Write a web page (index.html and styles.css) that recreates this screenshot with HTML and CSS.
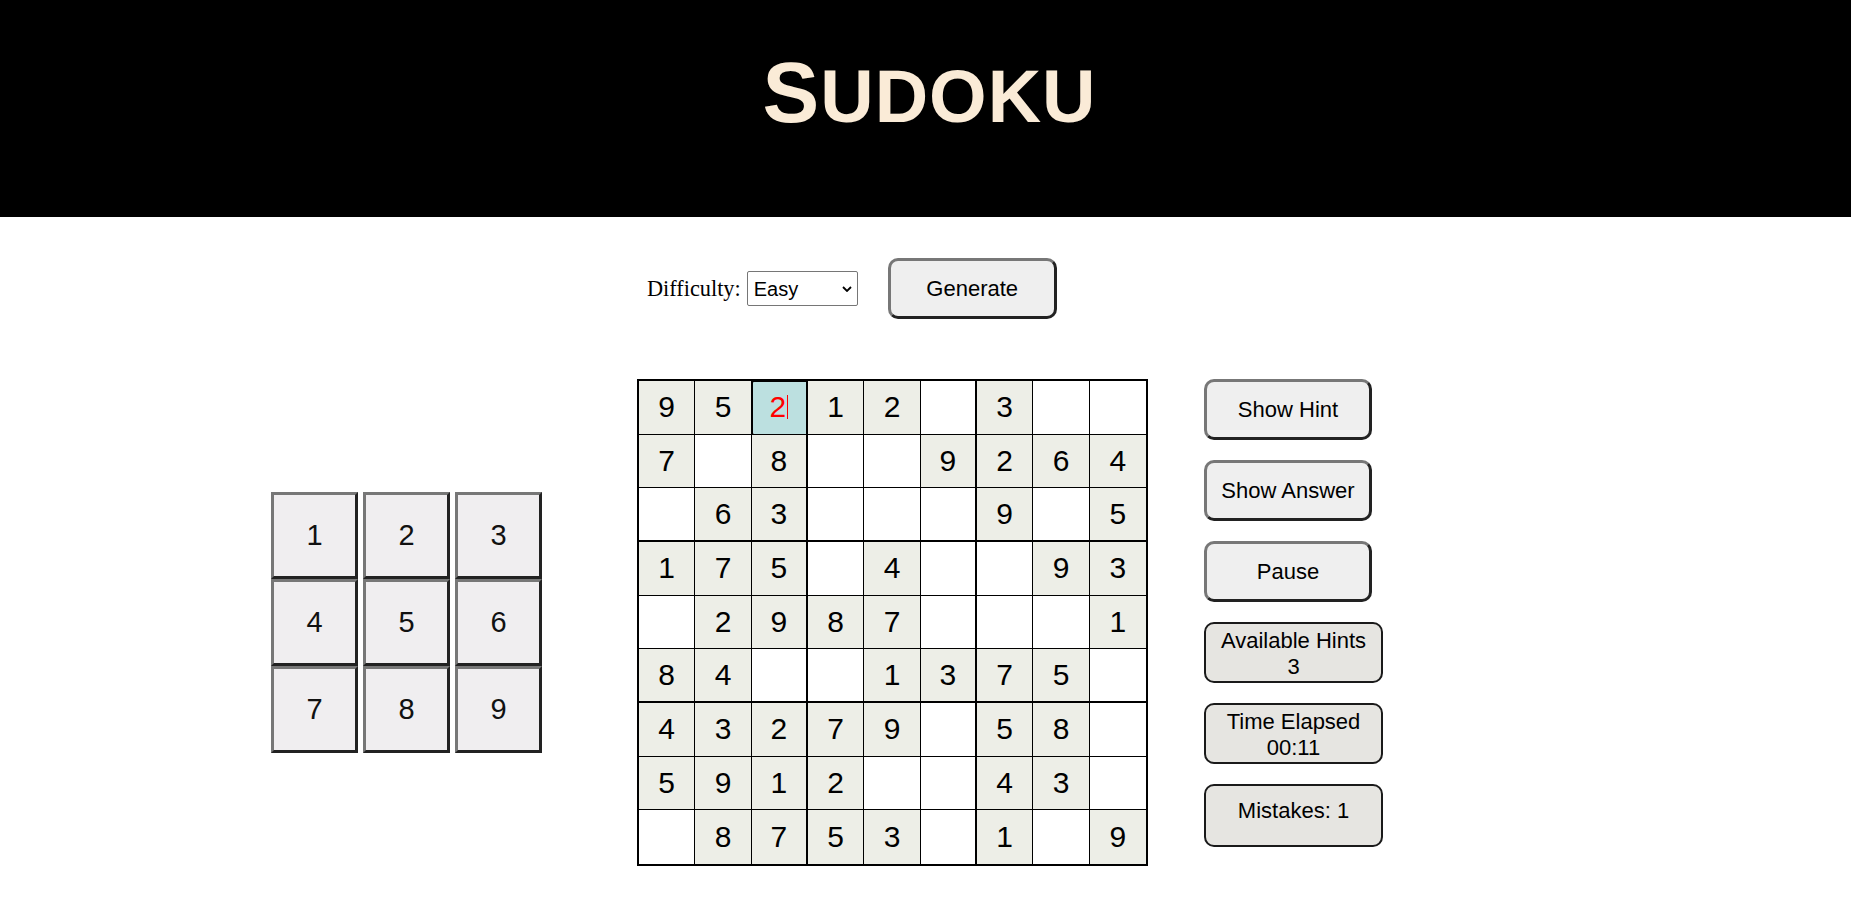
FILE: index.html
```html
<!DOCTYPE html>
<html lang="en">
<head>
<meta charset="utf-8">
<title>Sudoku</title>
<link rel="stylesheet" href="styles.css">
</head>
<body>
<header class="top">
  <h1 class="title"><span class="big">S</span><span class="small">UDOKU</span></h1>
</header>

<div class="controls">
  <label class="diff-label" for="diff">Difficulty:</label>
  <span class="select-wrap">
    <select id="diff" class="diff-select">
      <option>Easy</option>
      <option>Medium</option>
      <option>Hard</option>
    </select>
    <svg class="chev" width="10" height="6" viewBox="0 0 10 6" aria-hidden="true"><path d="M1 1 L5 5 L9 1" fill="none" stroke="#000" stroke-width="1.8"/></svg>
  </span>
  <button class="btn gen">Generate</button>
</div>

<main class="game">
  <div class="pad">
    <div class="pad-row"><button class="key">1</button><button class="key">2</button><button class="key">3</button></div>
    <div class="pad-row"><button class="key">4</button><button class="key">5</button><button class="key">6</button></div>
    <div class="pad-row"><button class="key">7</button><button class="key">8</button><button class="key">9</button></div>
  </div>

  <div class="board">
    <div class="cell f">9</div><div class="cell f">5</div><div class="cell sel"><span class="val">2</span><span class="caret"></span></div><div class="cell f">1</div><div class="cell f">2</div><div class="cell"></div><div class="cell f">3</div><div class="cell"></div><div class="cell"></div>
    <div class="cell f">7</div><div class="cell"></div><div class="cell f">8</div><div class="cell"></div><div class="cell"></div><div class="cell f">9</div><div class="cell f">2</div><div class="cell f">6</div><div class="cell f">4</div>
    <div class="cell"></div><div class="cell f">6</div><div class="cell f">3</div><div class="cell"></div><div class="cell"></div><div class="cell"></div><div class="cell f">9</div><div class="cell"></div><div class="cell f">5</div>
    <div class="cell f">1</div><div class="cell f">7</div><div class="cell f">5</div><div class="cell"></div><div class="cell f">4</div><div class="cell"></div><div class="cell"></div><div class="cell f">9</div><div class="cell f">3</div>
    <div class="cell"></div><div class="cell f">2</div><div class="cell f">9</div><div class="cell f">8</div><div class="cell f">7</div><div class="cell"></div><div class="cell"></div><div class="cell"></div><div class="cell f">1</div>
    <div class="cell f">8</div><div class="cell f">4</div><div class="cell"></div><div class="cell"></div><div class="cell f">1</div><div class="cell f">3</div><div class="cell f">7</div><div class="cell f">5</div><div class="cell"></div>
    <div class="cell f">4</div><div class="cell f">3</div><div class="cell f">2</div><div class="cell f">7</div><div class="cell f">9</div><div class="cell"></div><div class="cell f">5</div><div class="cell f">8</div><div class="cell"></div>
    <div class="cell f">5</div><div class="cell f">9</div><div class="cell f">1</div><div class="cell f">2</div><div class="cell"></div><div class="cell"></div><div class="cell f">4</div><div class="cell f">3</div><div class="cell"></div>
    <div class="cell"></div><div class="cell f">8</div><div class="cell f">7</div><div class="cell f">5</div><div class="cell f">3</div><div class="cell"></div><div class="cell f">1</div><div class="cell"></div><div class="cell f">9</div>
  </div>

  <div class="side">
    <button class="btn">Show Hint</button>
    <button class="btn">Show Answer</button>
    <button class="btn">Pause</button>
    <div class="info">Available Hints<br>3</div>
    <div class="info">Time Elapsed<br>00:11</div>
    <div class="info single">Mistakes: 1</div>
  </div>
</main>
</body>
</html>
```

FILE: styles.css
```css
html, body {
  margin: 0;
  padding: 0;
  background: #fff;
}

body {
  font-family: "Liberation Serif", "Times New Roman", serif;
  color: #000;
}

.top {
  height: 217px;
  background: #000;
  padding-top: 50px;
  box-sizing: border-box;
}

.title {
  margin: 0;
  padding-left: 8px;
  text-align: center;
  font-family: "Liberation Sans", Arial, sans-serif;
  font-weight: bold;
  color: #faebd7;
  line-height: 85px;
  letter-spacing: 1px;
}

.title .big {
  font-size: 85px;
}

.title .small {
  font-size: 74px;
}

.controls {
  display: flex;
  align-items: center;
  margin-top: 41px;
  padding-left: 647px;
  height: 61px;
}

.diff-label {
  font-size: 22.3px;
  margin-right: 6px;
}

.select-wrap {
  position: relative;
  display: inline-flex;
  margin-right: 30px;
}

.diff-select {
  -webkit-appearance: none;
  appearance: none;
  width: 111px;
  height: 35px;
  font-family: "Liberation Sans", Arial, sans-serif;
  font-size: 20px;
  border: 1px solid #767676;
  border-radius: 2px;
  background: #fff;
  color: #000;
  padding: 0 0 0 6px;
  margin: 0;
}

.chev {
  position: absolute;
  right: 6px;
  top: 15px;
  pointer-events: none;
}

.btn {
  width: 169px;
  height: 61px;
  font-family: "Liberation Sans", Arial, sans-serif;
  font-size: 22px;
  color: #000;
  background: #efefef;
  border: 3px solid;
  border-color: #777 #222 #222 #777;
  border-radius: 10px;
  padding: 0;
  box-sizing: border-box;
}

.game {
  display: flex;
  align-items: center;
  margin-top: 60px;
  padding-left: 271px;
}

.pad {
  display: flex;
  flex-direction: column;
  margin-right: 95px;
}

.pad-row {
  display: flex;
  gap: 5px;
}

.key {
  width: 87px;
  height: 87px;
  box-sizing: border-box;
  font-family: "Liberation Sans", Arial, sans-serif;
  font-size: 29px;
  color: #111;
  background: #f0eef0;
  border: 3px solid;
  border-color: #777 #222 #222 #777;
  padding: 0;
}

.board {
  display: grid;
  grid-template-columns: repeat(9, 1fr);
  grid-template-rows: repeat(9, 1fr);
  width: 511px;
  height: 487px;
  box-sizing: border-box;
  border: 2px solid #000;
  margin-right: 56px;
}

.cell {
  display: flex;
  align-items: center;
  justify-content: center;
  background: #fff;
  border-right: 1px solid #000;
  border-bottom: 1px solid #000;
  font-family: "Liberation Sans", Arial, sans-serif;
  font-size: 30px;
  color: #000;
}

.cell.f {
  background: #edeee7;
}

.cell:nth-child(9n+3),
.cell:nth-child(9n+6) {
  border-right-width: 2px;
}

.cell:nth-child(9n) {
  border-right: none;
}

.cell:nth-child(n+19):nth-child(-n+27),
.cell:nth-child(n+46):nth-child(-n+54) {
  border-bottom-width: 2px;
}

.cell:nth-child(n+73) {
  border-bottom: none;
}

.cell.sel {
  background: #bce0e0;
  color: #f00;
  outline: 2px solid #000;
  outline-offset: -1px;
  border-radius: 2px;
  box-shadow: inset 1px 0 0 #fff;
}

.caret {
  display: inline-block;
  width: 1px;
  height: 24px;
  background: #f00;
  margin-left: 1px;
}

.side {
  align-self: flex-start;
  display: flex;
  flex-direction: column;
  gap: 20px;
}

.side .btn {
  width: 168px;
}

.info {
  width: 179px;
  height: 61px;
  box-sizing: border-box;
  padding-top: 4px;
  background: #e6e5e1;
  border: 2px solid #1a1a1a;
  border-radius: 10px;
  font-family: "Liberation Sans", Arial, sans-serif;
  font-size: 22px;
  line-height: 26px;
  text-align: center;
  color: #000;
}

.info.single {
  height: 63px;
  padding-top: 12px;
}
```
